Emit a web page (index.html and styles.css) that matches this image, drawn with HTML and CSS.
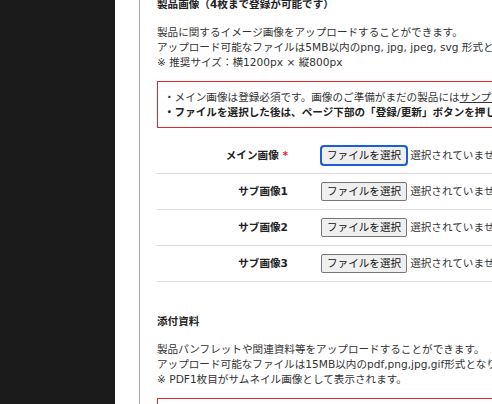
FILE: index.html
```html
<!DOCTYPE html>
<html lang="ja">
<head>
<meta charset="utf-8">
<link rel="stylesheet" href="styles.css">
</head>
<body>
<div class="layout">
  <aside class="sidebar"></aside>
  <main class="main">
    <div class="panel">
      <section class="section">
        <h2 class="section-title">製品画像（4枚まで登録が可能です）</h2>
        <p class="desc">製品に関するイメージ画像をアップロードすることができます。<br>アップロード可能なファイルは5MB以内のpng, jpg, jpeg, svg 形式となります。<br>※ 推奨サイズ：横1200px × 縦800px</p>
        <div class="notice">
          <p>・メイン画像は登録必須です。画像のご準備がまだの製品には<a class="link" href="#">サンプル画像</a>をご利用ください。</p>
          <p class="strong">・ファイルを選択した後は、ページ下部の「登録/更新」ボタンを押してください。</p>
        </div>
        <div class="rows">
          <div class="row">
            <div class="label">メイン画像 <span class="req">*</span></div>
            <div class="value"><span class="file-btn is-focus">ファイルを選択</span><span class="file-name">選択されていません</span></div>
          </div>
          <div class="row">
            <div class="label">サブ画像1</div>
            <div class="value"><span class="file-btn">ファイルを選択</span><span class="file-name">選択されていません</span></div>
          </div>
          <div class="row">
            <div class="label">サブ画像2</div>
            <div class="value"><span class="file-btn">ファイルを選択</span><span class="file-name">選択されていません</span></div>
          </div>
          <div class="row">
            <div class="label">サブ画像3</div>
            <div class="value"><span class="file-btn">ファイルを選択</span><span class="file-name">選択されていません</span></div>
          </div>
        </div>
      </section>
      <section class="section section-2">
        <h2 class="section-title">添付資料</h2>
        <p class="desc">製品パンフレットや関連資料等をアップロードすることができます。<br>アップロード可能なファイルは15MB以内のpdf,png,jpg,gif形式となります。<br>※ PDF1枚目がサムネイル画像として表示されます。</p>
        <div class="notice">
          <p>・資料は任意でご登録いただけます。</p>
          <p class="strong">・ファイルを選択した後は、ページ下部の「登録/更新」ボタンを押してください。</p>
        </div>
      </section>
    </div>
  </main>
</div>
</body>
</html>
```
FILE: styles.css
```css
html, body {
  margin: 0;
  padding: 0;
  overflow: hidden;
  background: #fff;
}
body {
  font-family: "DejaVu Sans", "Noto Sans CJK JP", sans-serif;
  font-size: 10.6px;
  line-height: 15px;
  color: #333;
}
.layout {
  display: flex;
  width: 900px;
  min-height: 404px;
}
.sidebar {
  flex: none;
  width: 115px;
  background: #1b1b1b;
}
.main {
  flex: none;
  padding-left: 24px;
}
.panel {
  border-left: 1px solid #a9a9a9;
  padding-left: 17px;
  width: 640px;
  min-height: 420px;
}
.section-title {
  margin: -3px 0 0;
  font-size: 10.6px;
  line-height: 15px;
  font-weight: bold;
  color: #222;
}
.desc {
  margin: 13px 0 0;
}
.notice {
  margin-top: 11px;
  border: 1px solid #e8262a;
  padding: 8px 6px 7px;
}
.notice p {
  margin: 0;
  white-space: nowrap;
}
.notice .strong {
  font-weight: bold;
  color: #222;
}
.link {
  color: #333;
  text-decoration: underline;
}
.rows {
  margin-top: 10px;
}
.row {
  display: flex;
  align-items: center;
  height: 35px;
  border-bottom: 1px solid #dcdcdc;
}
.label {
  flex: none;
  width: 131px;
  padding-right: 16px;
  text-align: right;
  font-weight: bold;
  color: #222;
}
.req {
  color: #e8262a;
}
.value {
  display: flex;
  align-items: center;
  padding-left: 17px;
  white-space: nowrap;
}
.file-btn {
  display: inline-block;
  box-sizing: border-box;
  height: 19px;
  line-height: 17px;
  padding: 0 5px;
  border: 1px solid #767676;
  border-radius: 2px;
  background: #efefef;
  color: #111;
}
.file-btn.is-focus {
  outline: 2px solid #1d5ed0;
  outline-offset: -1px;
  border-radius: 3px;
}
.file-name {
  margin-left: 3px;
  color: #333;
}
.section-2 {
  margin-top: 35px;
}
```
